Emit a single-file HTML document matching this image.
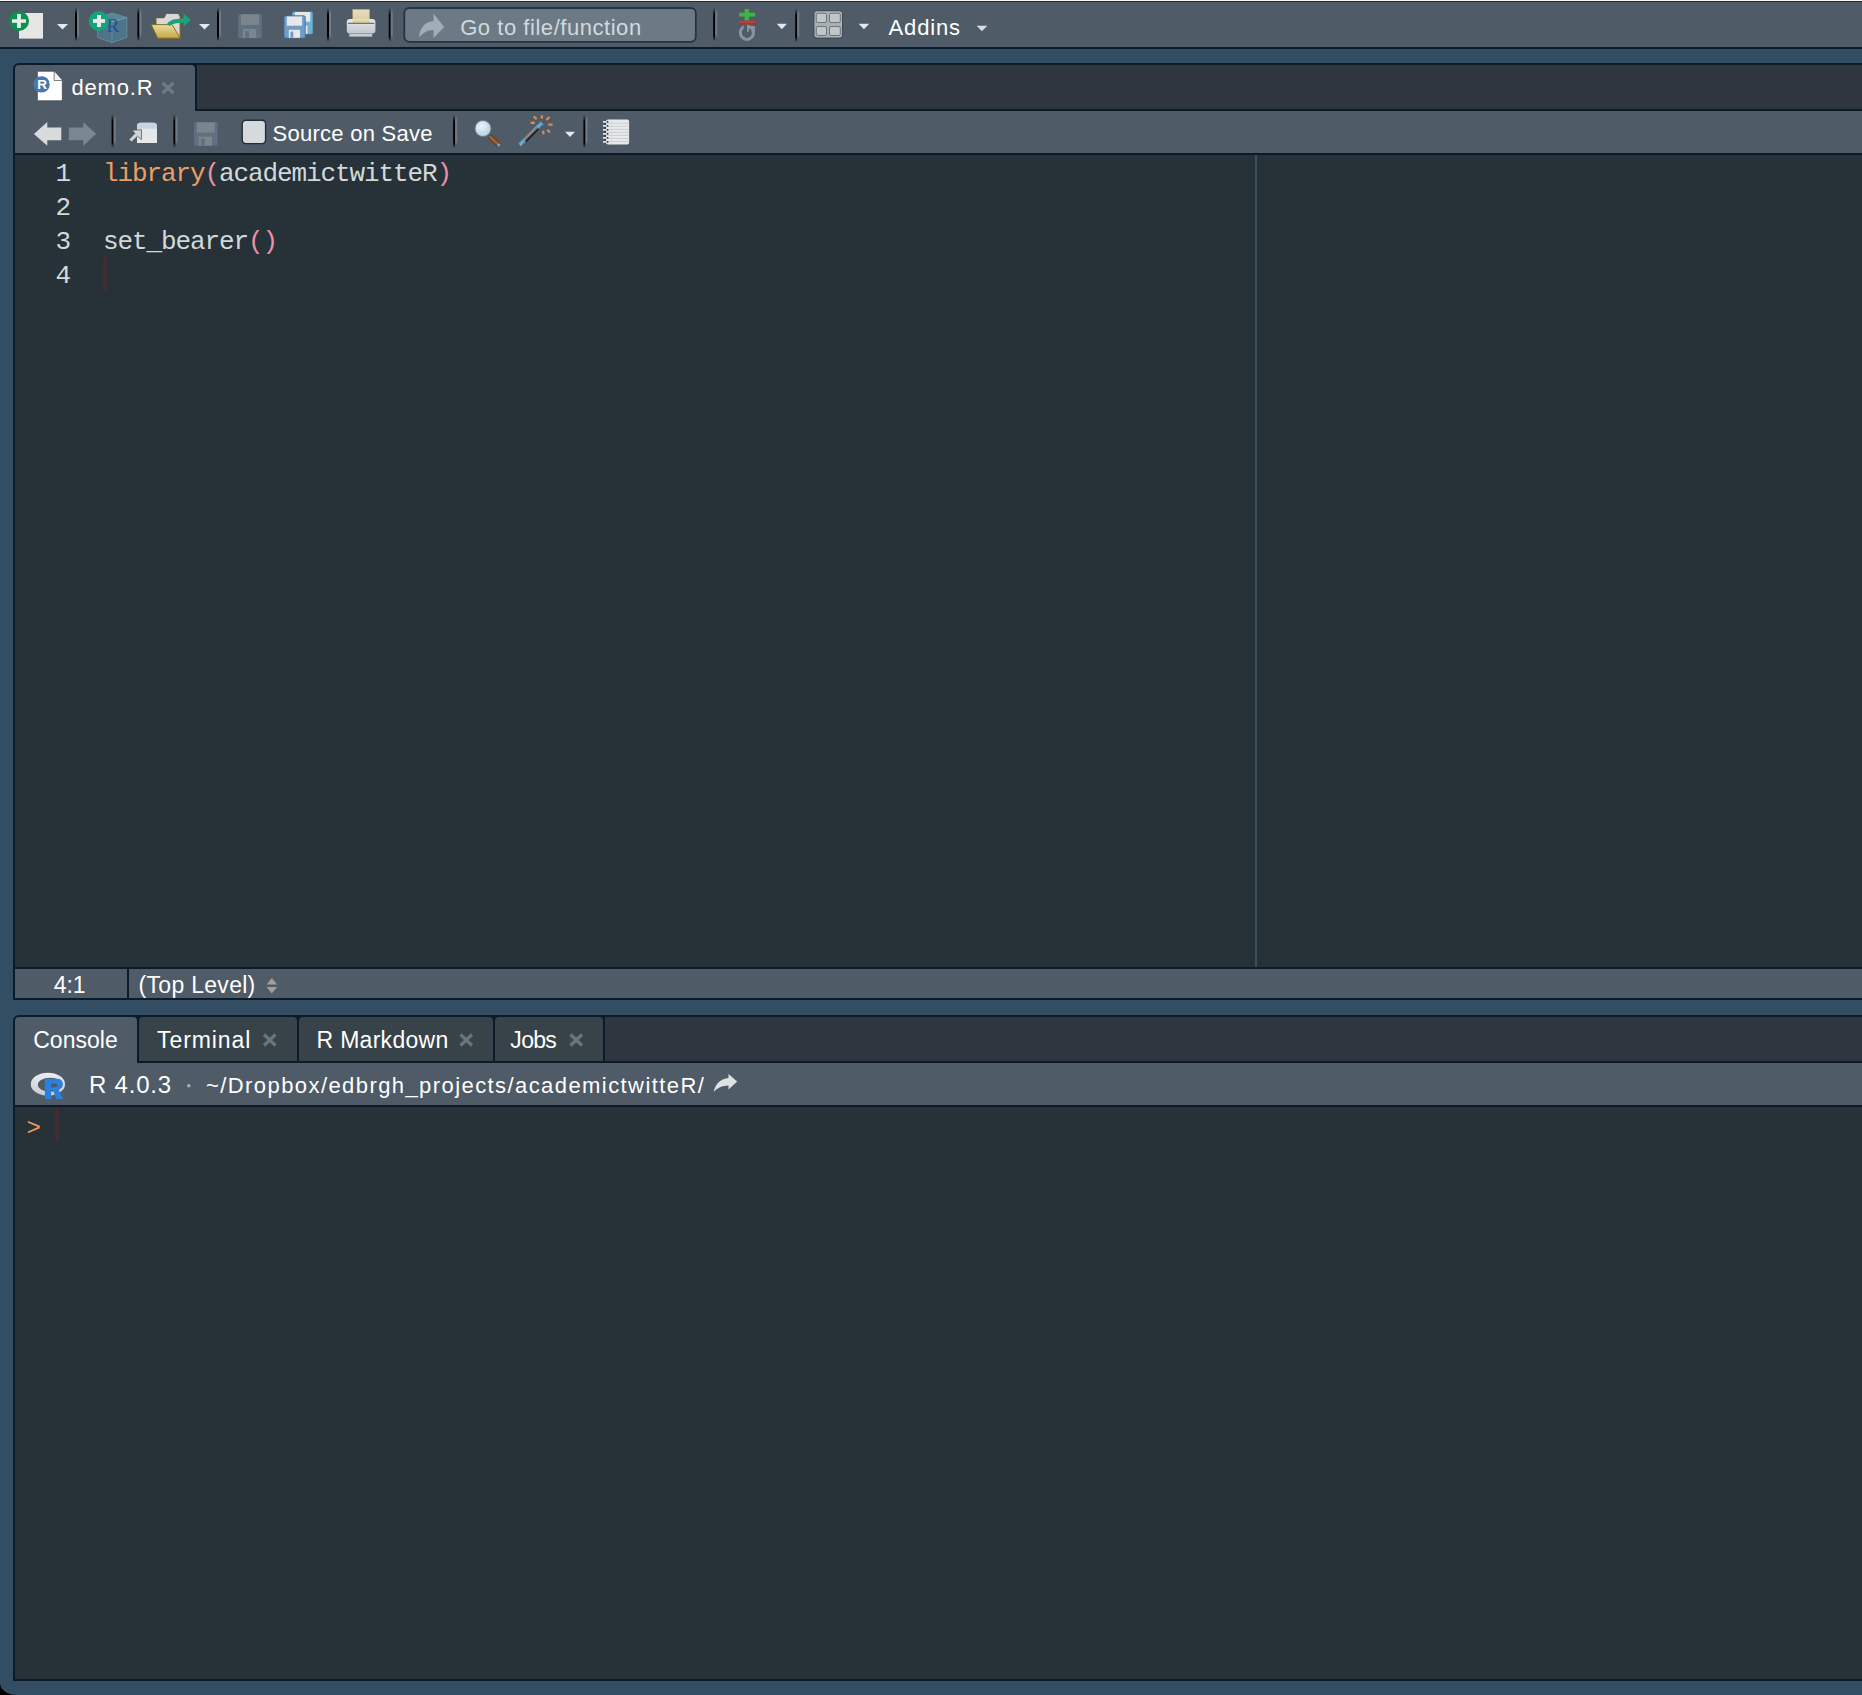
<!DOCTYPE html>
<html><head><meta charset="utf-8">
<style>
html,body{margin:0;padding:0;width:1862px;height:1695px;overflow:hidden;background:#334d62;}
*{box-sizing:border-box;}
.a{position:absolute;}
.ui{font-family:"Liberation Sans",sans-serif;font-size:22px;color:#ffffff;white-space:pre;line-height:1;}
.mono{font-family:"Liberation Mono",monospace;font-size:24px;white-space:pre;line-height:1;}
.bd{background:#0b1b29;}
.tb{background:#4f5b67;}
.sep{position:absolute;width:3px;background:linear-gradient(to right,#07121c 0,#07121c 2px,#6a7783 2px);}
.dd{position:absolute;width:0;height:0;border-left:5px solid transparent;border-right:5px solid transparent;border-top:6px solid #e9edf0;}
</style></head>
<body>
<!-- window top edge -->
<div class="a" style="left:0;top:0;width:1862px;height:1px;background:#f4f4f4"></div>
<div class="a" style="left:0;top:1px;width:1862px;height:1px;background:#1f2c38"></div>
<!-- main toolbar -->
<div class="a tb" style="left:0;top:2px;width:1862px;height:45px"></div>
<div class="a bd" style="left:0;top:47px;width:1862px;height:2px"></div>

<!-- ===== EDITOR PANE ===== -->
<div class="a bd" style="left:13px;top:63px;width:1849px;height:904px;border-radius:6px 0 0 0"></div>
<!-- tab strip -->
<div class="a" style="left:197px;top:65px;width:1665px;height:44px;background:#30363f"></div>
<!-- active tab -->
<div class="a tb" style="left:15px;top:65px;width:180px;height:46px;border-radius:4px 4px 0 0"></div>
<!-- editor toolbar -->
<div class="a tb" style="left:15px;top:111px;width:1847px;height:42px"></div>
<!-- editor body -->
<div class="a" style="left:15px;top:155px;width:1847px;height:812px;background:#263238"></div>
<div class="a" style="left:1255px;top:155px;width:2px;height:812px;background:#3c525b"></div>
<!-- status bar -->
<div class="a bd" style="left:13px;top:967px;width:1849px;height:33px"></div>
<div class="a tb" style="left:15px;top:969px;width:112px;height:29px"></div>
<div class="a tb" style="left:129px;top:969px;width:1733px;height:29px"></div>

<!-- ===== CONSOLE PANE ===== -->
<div class="a bd" style="left:13px;top:1015px;width:1849px;height:666px;border-radius:6px 0 0 0"></div>
<div class="a" style="left:605px;top:1017px;width:1257px;height:44px;background:#30363f"></div>
<div class="a tb" style="left:15px;top:1017px;width:122px;height:46px;border-radius:4px 4px 0 0"></div>
<div class="a" style="left:139px;top:1017px;width:158px;height:44px;background:#384249;border-radius:4px 4px 0 0"></div>
<div class="a" style="left:299px;top:1017px;width:194px;height:44px;background:#384249;border-radius:4px 4px 0 0"></div>
<div class="a" style="left:495px;top:1017px;width:108px;height:44px;background:#384249;border-radius:4px 4px 0 0"></div>
<div class="a tb" style="left:15px;top:1063px;width:1847px;height:42px"></div>
<div class="a" style="left:15px;top:1107px;width:1847px;height:572px;background:#263238"></div>
<!-- bottom-left window corner -->
<svg class="a" style="left:0;top:1683px" width="17" height="12"><path d="M0 0 L0 12 L17 12 A17 12 0 0 1 0 0 Z" fill="#000"/></svg>


<!-- ===== ICONS ===== -->
<svg class="a" style="left:0;top:0" width="1862" height="1695" viewBox="0 0 1862 1695">
<defs>
 <linearGradient id="sepg" x1="0" y1="0" x2="0" y2="1">
  <stop offset="0" stop-color="#000" stop-opacity="0.1"/><stop offset="0.2" stop-color="#000"/><stop offset="0.85" stop-color="#000"/><stop offset="1" stop-color="#000" stop-opacity="0.2"/>
 </linearGradient>
 <linearGradient id="sepl" x1="0" y1="0" x2="0" y2="1">
  <stop offset="0" stop-color="#6e7b87" stop-opacity="0"/><stop offset="0.15" stop-color="#6e7b87"/><stop offset="0.85" stop-color="#6e7b87"/><stop offset="1" stop-color="#6e7b87" stop-opacity="0"/>
 </linearGradient>
 <g id="sep"><rect x="0.4" y="0.2" width="2" height="32.4" fill="url(#sepg)"/><rect x="2.5" y="0.5" width="2" height="30" fill="url(#sepl)"/></g>
 <linearGradient id="fold" x1="0" y1="0" x2="0" y2="1"><stop offset="0" stop-color="#e9dc9c"/><stop offset="1" stop-color="#c9a84c"/></linearGradient>
 <linearGradient id="prn" x1="0" y1="0" x2="0" y2="1"><stop offset="0" stop-color="#e6e8ea"/><stop offset="1" stop-color="#c2c7cb"/></linearGradient>
 <linearGradient id="pap" x1="0" y1="0" x2="0" y2="1"><stop offset="0" stop-color="#e9dfbc"/><stop offset="1" stop-color="#d6c898"/></linearGradient>
 <radialGradient id="lens" cx="0.4" cy="0.35" r="0.7"><stop offset="0" stop-color="#eef3f6"/><stop offset="1" stop-color="#b4cde2"/></radialGradient>
 <linearGradient id="ring" x1="0" y1="0" x2="0" y2="1"><stop offset="0" stop-color="#eceef0"/><stop offset="1" stop-color="#c8ccd0"/></linearGradient>
</defs>

<!-- TOP TOOLBAR -->
<!-- new file -->
<rect x="19" y="13" width="24" height="25.6" fill="#e6e6e6"/>
<circle cx="19" cy="21" r="10" fill="#0b9152"/>
<rect x="12" y="19.3" width="14" height="3.5" fill="#ebebeb"/>
<rect x="17.1" y="14" width="3.8" height="14" fill="#ebebeb"/>
<path d="M57 24 h11 l-5.5 5.5z" fill="#e5e8eb"/>
<use href="#sep" x="74.6" y="8"/>
<!-- new project -->
<path d="M97.6 18 L112 13 L126.9 17.5 L126.9 37.5 L112 42.6 L97.6 37.5 Z" fill="#4f88a8" fill-opacity="0.55" stroke="#6aa6c6" stroke-opacity="0.7" stroke-width="0.8"/>
<path d="M97.6 18 L112 13 L126.9 17.5 L112 22 Z" fill="#7aa6bf" fill-opacity="0.3"/><path d="M112 22 L126.9 17.5" stroke="#8cc0da" stroke-width="0.8" opacity="0.7"/>
<path d="M112 22 L112 42.6" stroke="#6fa0bd" stroke-width="0.8" opacity="0.6"/>
<text x="106.5" y="31.8" font-family="Liberation Serif" font-size="19" fill="#1c5590">R</text>
<circle cx="98.8" cy="21" r="10" fill="#16a27a"/>
<rect x="93" y="19.1" width="12" height="3.8" fill="#e8e8e8"/>
<rect x="97" y="15" width="4" height="12" fill="#e8e8e8"/>
<use href="#sep" x="137" y="8"/>
<!-- open folder -->
<path d="M155.5 24.5 V17.4 H163.8 L166 13.1 H178.6 L180.7 16 V38.6 H157.4 Z" fill="#7a6420"/>
<path d="M156.5 24.5 V18.2 H164.3 L166.5 14.1 H178 L179.6 16.4 V37.6 H158 Z" fill="#d8d8d8"/>
<path d="M151.2 24.6 H172.1 L180.2 38.2 H157.6 Z" fill="url(#fold)" stroke="#7a6420" stroke-width="0.9"/>
<path d="M167 24 C170 19.5 175 18.6 183.5 18.7 V13.6 L190.8 20 L183.5 26.8 V23 C177 23 172 23.5 169.5 26 Z" fill="#1aa278"/>
<path d="M199 24 h11 l-5.5 5.5z" fill="#e5e8eb"/>
<use href="#sep" x="216.6" y="8"/>
<!-- save (disabled) -->
<rect x="238" y="14.1" width="23.8" height="24.1" rx="1.6" fill="#5e7082"/>
<rect x="240.9" y="14.5" width="18.1" height="10.4" fill="#7c858e"/>
<rect x="242.9" y="29" width="13.3" height="9" fill="#7c858e"/>
<rect x="245.3" y="31" width="3.7" height="7" fill="#5e7082"/>
<!-- save all -->
<rect x="292" y="11.6" width="21" height="22.6" rx="1.6" fill="#6db2d2" stroke="#3f6d8c" stroke-width="0.7"/>
<rect x="294.9" y="12" width="15.3" height="9.6" fill="#e6e8ea"/>
<rect x="296.5" y="25.5" width="11" height="8.5" fill="#e6e8ea"/>
<rect x="284" y="15.7" width="21.3" height="22.5" rx="1.6" fill="#6f9dc9" stroke="#3f5f84" stroke-width="0.7"/>
<rect x="286.8" y="16.5" width="15.3" height="9.2" fill="#e8e8e8"/>
<rect x="288.8" y="29.8" width="11.3" height="8" fill="#e8e8e8"/>
<rect x="290.4" y="31.6" width="2.9" height="6.2" fill="#6f9dc9"/>
<use href="#sep" x="326.6" y="8.4"/>
<!-- print -->
<rect x="352.5" y="9.2" width="17.3" height="14" fill="url(#pap)" stroke="#8f8460" stroke-width="0.5"/>
<rect x="346.8" y="18.9" width="28.6" height="14.5" rx="3" fill="url(#prn)"/>
<rect x="352.5" y="18.9" width="17.3" height="4" fill="url(#pap)"/>
<rect x="348" y="22.8" width="26.2" height="1" fill="#555d63"/>
<rect x="349.3" y="33.8" width="22.9" height="2.8" fill="#c8ccd0"/>
<use href="#sep" x="388.3" y="8.4"/>
<!-- go to file box -->
<rect x="404.3" y="8" width="291.5" height="33.8" rx="5" fill="#6b7a85" stroke="#253442" stroke-width="1.8"/>
<path d="M444.2 26.9 L433.5 13.4 V21.1 C425 21.8 419.5 28.5 419 37.5 C423.5 32.5 427.5 30.3 433.5 30.1 V37.9 Z" fill="#a2adb6"/>
<use href="#sep" x="712.8" y="8"/>
<!-- git/vcs icon -->
<rect x="739" y="12.7" width="16.1" height="3.9" fill="#3fb24a"/>
<rect x="744.6" y="8.9" width="4.4" height="11.6" fill="#3fb24a"/>
<rect x="739" y="20.8" width="16.1" height="2.2" fill="#c93a30"/>
<rect x="739" y="23" width="16.1" height="1.7" fill="#9a3d38"/>
<circle cx="746.9" cy="32.8" r="6.47" fill="none" stroke="#8594a0" stroke-width="3.25"/>
<rect x="746.9" y="26.1" width="8" height="6.7" fill="#8594a0"/>
<circle cx="746.9" cy="32.8" r="4.85" fill="#4f5b67"/>
<rect x="747" y="26.1" width="1.9" height="5.7" fill="#8594a0"/>
<rect x="743.8" y="25" width="3.2" height="4" fill="#4f5b67"/>
<path d="M776.7 23.7 h10.3 l-5.15 5.5z" fill="#e5e8eb"/>
<use href="#sep" x="794.8" y="8.9"/>
<!-- grid layout -->
<rect x="813.9" y="10.7" width="28.7" height="27.4" rx="3" fill="#a7b0b6" stroke="#3a4752" stroke-width="1"/>
<rect x="816.3" y="13.3" width="10.2" height="9.2" rx="1.5" fill="#c3c6c8" stroke="#5a646c" stroke-width="0.8"/>
<rect x="829.5" y="13.3" width="10.8" height="9.2" rx="1.5" fill="#c3c6c8" stroke="#5a646c" stroke-width="0.8"/>
<rect x="816.3" y="26.5" width="10.2" height="9" rx="1.5" fill="#c3c6c8" stroke="#5a646c" stroke-width="0.8"/>
<rect x="829.5" y="26.5" width="10.8" height="9" rx="1.5" fill="#c3c6c8" stroke="#5a646c" stroke-width="0.8"/>
<path d="M858.7 23.7 h10.5 l-5.25 5.5z" fill="#e5e8eb"/>
<path d="M976.6 25.8 h10.7 l-5.35 5.5z" fill="#d9dcdf"/>

<!-- EDITOR TAB -->
<path d="M37.4 71.3 H54.1 L62.3 80.5 V100.7 H37.4 Z" fill="#ffffff" stroke="#2a3540" stroke-width="0.6"/>
<path d="M54.1 71.3 V80.5 H62.3" fill="#f2f2f2" stroke="#56606a" stroke-width="0.8"/>
<circle cx="41.5" cy="84.4" r="8.2" fill="#4a76b0"/>
<text x="37.3" y="89.4" font-family="Liberation Sans" font-size="13.5" font-weight="bold" fill="#ffffff">R</text>
<path d="M162.5 82.8 L173.5 93.3 M173.5 82.8 L162.5 93.3" stroke="#6e7a84" stroke-width="3.3"/>

<!-- EDITOR TOOLBAR -->
<path d="M33.9 133.9 L47.3 122.1 V127.4 H61.3 V140.3 H47.3 V145.7 Z" fill="#d8dadb"/>
<path d="M96.2 133.9 L83.3 122.1 V127.4 H68.8 V140.3 H83.3 V145.7 Z" fill="#7a8791"/>
<use href="#sep" x="111.2" y="114.5"/>
<path d="M137 126.2 Q137 122.7 140.5 122.7 H153.5 Q157 122.7 157 126.2 V143 H137 Z" fill="#e6e7e8"/>
<path d="M137 126.2 Q137 122.7 140.5 122.7 H153.5 Q157 122.7 157 126.2 V128.8 H137 Z" fill="#c4d4e4"/>
<path d="M131.9 130.1 L141.5 129.8 L141.4 139.5 L137.5 136.2 L131.5 142 L128.9 139.4 L134.9 133.4 Z" fill="#d3d6d8" stroke="#39444e" stroke-width="0.7" stroke-linejoin="round"/>
<use href="#sep" x="173" y="114.5"/>
<rect x="194" y="122" width="23.6" height="23.7" rx="1.6" fill="#5e7082"/>
<rect x="196.8" y="122.4" width="17.9" height="10.2" fill="#7c858e"/>
<rect x="198.6" y="136.6" width="13.4" height="9" fill="#7c858e"/>
<rect x="201" y="138.6" width="3.7" height="7" fill="#5e7082"/>
<!-- checkbox -->
<rect x="242.2" y="120.2" width="23.4" height="23.4" rx="3.8" fill="#d6dadd" stroke="#1f2e3c" stroke-width="1.4"/>
<use href="#sep" x="452.7" y="115"/>
<!-- magnifier -->
<path d="M489.6 136.3 L499 145.2" stroke="#5a3010" stroke-width="4.6"/>
<path d="M489.6 136.3 L499 145.2" stroke="#a8602a" stroke-width="3"/>
<path d="M498 144.2 L499.6 145.8" stroke="#5ab0e0" stroke-width="2.5"/>
<circle cx="483" cy="128.5" r="8" fill="url(#lens)" stroke="#5f7a92" stroke-width="0.9"/>
<!-- wand -->
<path d="M521 144 L541 124" stroke="#6a6a6a" stroke-width="4.6"/>
<path d="M522.2 145.2 L542.2 125.2" stroke="#151515" stroke-width="1.6"/>
<path d="M520.2 143.2 L540.2 123.2" stroke="#b5b5b5" stroke-width="1.4" stroke-dasharray="1 0.8"/>
<path d="M519.8 145.2 L524.6 140.4" stroke="#4f8fb5" stroke-width="4.6"/>
<path d="M520 144.6 L524.2 140.4" stroke="#9fd0ea" stroke-width="1.6" stroke-dasharray="1 0.8"/>
<path d="M537.4 127.6 L542.2 122.8" stroke="#4f8fb5" stroke-width="4.6"/>
<path d="M537.6 127.2 L541.8 123" stroke="#9fd0ea" stroke-width="1.6" stroke-dasharray="1 0.8"/>
<g stroke="#de8a58" stroke-width="2.3">
 <path d="M533.6 116.3 L536.6 119.3"/>
 <path d="M541.9 115.3 V118.6"/>
 <path d="M549.3 117 L546.3 120"/>
 <path d="M530.6 122.8 H534.8"/>
 <path d="M548.3 124.6 H552.6"/>
 <path d="M543 130.8 L543.6 134.2"/>
 <path d="M547.3 129.8 L550 132.5"/>
</g>
<path d="M565 131.7 h10 l-5 5.3z" fill="#e5e8eb"/>
<use href="#sep" x="583" y="115"/>
<!-- notebook -->
<rect x="606.1" y="119.6" width="23" height="24.9" rx="2" fill="#e8eaec"/>
<g fill="#c5ccd3"><rect x="606.1" y="122.8" width="23" height="0.9"/><rect x="606.1" y="125.8" width="23" height="0.9"/><rect x="606.1" y="128.9" width="23" height="0.9"/><rect x="606.1" y="131.9" width="23" height="0.9"/><rect x="606.1" y="134.9" width="23" height="0.9"/><rect x="606.1" y="137.9" width="23" height="0.9"/><rect x="606.1" y="141.1" width="23" height="0.9"/></g>
<rect x="611.3" y="119.6" width="0.6" height="24.9" fill="#cfd3d6"/>
<g fill="#3c3c3c"><rect x="606.8" y="121" width="1.6" height="1.7"/><rect x="604.3" y="123" width="1.6" height="1.7"/><rect x="606.8" y="125" width="1.6" height="1.7"/><rect x="604.3" y="127" width="1.6" height="1.7"/><rect x="606.8" y="129" width="1.6" height="1.7"/><rect x="604.3" y="131" width="1.6" height="1.7"/><rect x="606.8" y="133" width="1.6" height="1.7"/><rect x="604.3" y="135" width="1.6" height="1.7"/><rect x="606.8" y="137" width="1.6" height="1.7"/><rect x="604.3" y="139" width="1.6" height="1.7"/><rect x="606.8" y="141" width="1.6" height="1.7"/></g>
<g fill="#e6e9ec"><rect x="603" y="121" width="3" height="1.7"/><rect x="603" y="125" width="3" height="1.7"/><rect x="603" y="129" width="3" height="1.7"/><rect x="603" y="133" width="3" height="1.7"/><rect x="603" y="137" width="3" height="1.7"/><rect x="603" y="141" width="3" height="1.7"/></g>

<!-- code cursor -->
<rect x="103.3" y="257" width="3.4" height="33.4" fill="#4b2a30"/>

<!-- STATUS BAR -->
<path d="M266.6 984.5 L271.8 978 L277 984.5 Z" fill="#a39e97"/>
<path d="M266.6 987 L271.8 993.5 L277 987 Z" fill="#a39e97"/>

<!-- CONSOLE TABS close -->
<path d="M264 1034.5 L275.5 1045.5 M275.5 1034.5 L264 1045.5" stroke="#6c757c" stroke-width="3.2"/>
<path d="M460.5 1034.5 L472 1045.5 M472 1034.5 L460.5 1045.5" stroke="#6c757c" stroke-width="3.2"/>
<path d="M570.5 1034.5 L582 1045.5 M582 1034.5 L570.5 1045.5" stroke="#6c757c" stroke-width="3.2"/>

<!-- CONSOLE HEADER -->
<path fill-rule="evenodd" fill="url(#ring)" d="M30.8 1084.2 A17.1 11.5 0 1 0 65 1084.2 A17.1 11.5 0 1 0 30.8 1084.2 Z M37.9 1084.8 A12.3 7 0 1 0 62.5 1084.8 A12.3 7 0 1 0 37.9 1084.8 Z"/>
<path fill-rule="evenodd" fill="#2a80e0" d="M44.9 1078.8 H57 C61 1078.8 62.8 1081 62.8 1084.2 C62.8 1087 61 1088.6 58.5 1089.2 L63.1 1098.9 H56.5 L52.8 1090 H51.2 V1098.9 H44.9 Z M51.2 1083.5 H55.5 C56.6 1083.5 57.1 1084.2 57.1 1085.3 C57.1 1086.4 56.6 1087.2 55.5 1087.2 H51.2 Z"/>
<circle cx="188.8" cy="1085.8" r="1.8" fill="#a7afb5"/>
<path d="M737.2 1081.5 L728.5 1074 V1078 C721 1078.5 715.5 1083.5 713.6 1092 C717.5 1088 722 1085.6 728.5 1085.5 V1089.5 Z" fill="#dfe2e4"/>

<!-- console prompt cursor -->
<rect x="55.2" y="1107" width="3.5" height="33.8" fill="#4b2a30"/>
</svg>

<!-- ===== TEXT ===== -->
<div class="a ui" id="t_go" style="left:460.2px;top:17px;color:#d3d8db;letter-spacing:0.54px">Go to file/function</div>
<div class="a ui" id="t_addins" style="left:888.5px;top:17px;letter-spacing:0.86px">Addins</div>
<div class="a ui" id="t_demo" style="left:71.5px;top:77px;letter-spacing:0.80px">demo.R</div>
<div class="a ui" id="t_sos" style="left:272.5px;top:123px;letter-spacing:0.27px">Source on Save</div>
<div class="a ui" id="t_pos" style="font-size:23px;left:53.8px;top:974px;letter-spacing:-0.10px">4:1</div>
<div class="a ui" id="t_top" style="font-size:23px;left:138.6px;top:974px;letter-spacing:0.29px">(Top Level)</div>
<div class="a ui" id="t_con" style="font-size:23px;left:33.2px;top:1029px;letter-spacing:0.03px">Console</div>
<div class="a ui" id="t_term" style="font-size:23px;left:157.0px;top:1029px;letter-spacing:0.92px">Terminal</div>
<div class="a ui" id="t_rmd" style="font-size:23px;left:316.6px;top:1029px;letter-spacing:0.28px">R Markdown</div>
<div class="a ui" id="t_jobs" style="font-size:23px;left:510.3px;top:1029px;letter-spacing:-0.67px">Jobs</div>
<div class="a ui" id="t_rver" style="font-size:24px;left:89.0px;top:1073px;letter-spacing:0.78px">R 4.0.3</div>
<div class="a ui" id="t_path" style="font-size:22px;left:206.0px;top:1075px;letter-spacing:1.42px">~/Dropbox/edbrgh_projects/academictwitteR/</div>
<!-- code -->
<div class="a mono" style="left:38px;top:157px;color:#d3d8d9;line-height:34px;text-align:right;width:32px;font-size:26px;letter-spacing:-1.2px">1
2
3
4</div>
<div class="a mono" style="left:103px;top:157px;color:#d3d8d9;line-height:34px;font-size:26px;letter-spacing:-1.1px"><span style="color:#eb9f66">library</span><span style="color:#ec91a6">(</span>academictwitteR<span style="color:#ec91a6">)</span>

set_bearer<span style="color:#ec91a6">()</span>
</div>
<div class="a mono" style="left:26.5px;top:1117px;color:#f0965a">&gt;</div>
</body></html>
